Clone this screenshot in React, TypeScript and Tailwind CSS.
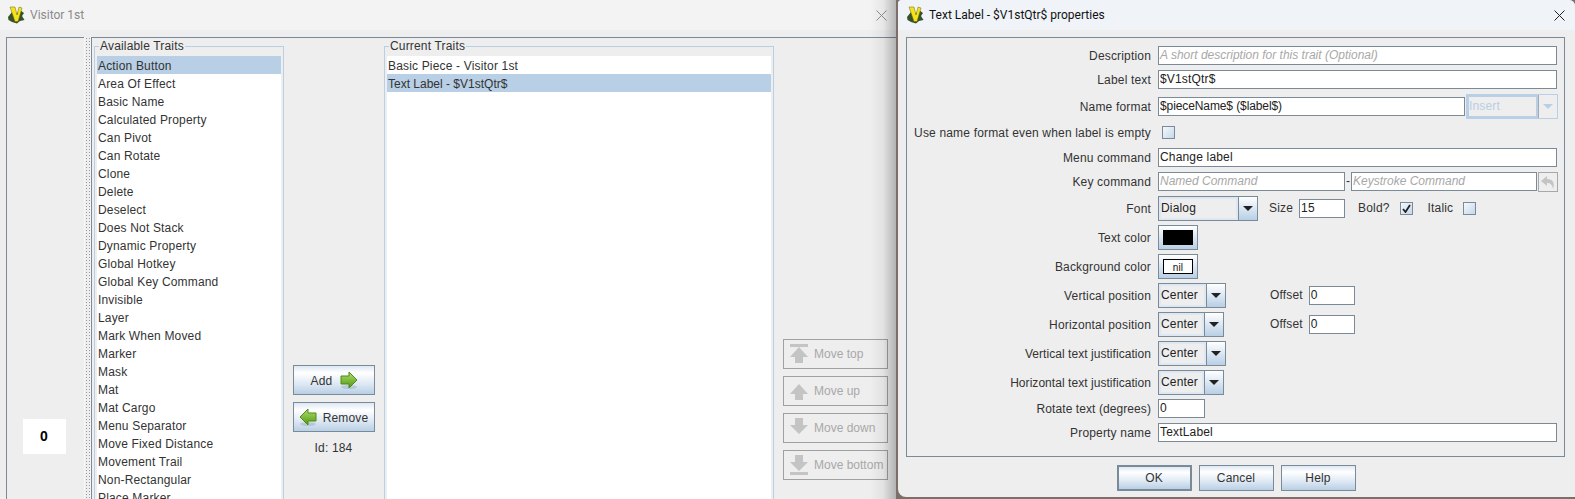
import React from 'react';

const traits = [
  'Action Button', 'Area Of Effect', 'Basic Name', 'Calculated Property', 'Can Pivot', 'Can Rotate', 'Clone',
  'Delete', 'Deselect', 'Does Not Stack', 'Dynamic Property', 'Global Hotkey', 'Global Key Command', 'Invisible',
  'Layer', 'Mark When Moved', 'Marker', 'Mask', 'Mat', 'Mat Cargo', 'Menu Separator', 'Move Fixed Distance',
  'Movement Trail', 'Non-Rectangular', 'Place Marker',
];

const Logo = () => (
  <svg width="18" height="18" viewBox="0 0 18 18" className="shrink-0">
    <path d="M1 11 L5 6 L9 8 L13 4 L17 7 L15 10 L17.5 14 L13 15 L10 17.5 L5 16 L1.5 14 Z" fill="#37522a" />
    <path d="M3 1 L8 1 L10 9 L12 1 L15 2 L11 15.5 L8 15.5 Z" fill="#f5e21a" stroke="#6d6a10" strokeWidth="0.5" />
  </svg>
);

const GreenArrow = ({ left }: { left?: boolean }) => (
  <svg width="18" height="18" viewBox="0 0 18 18" className={left ? 'shrink-0 -scale-x-100' : 'shrink-0'}>
    <defs>
      <linearGradient id="ga" x1="0" y1="0" x2="0" y2="1">
        <stop offset="0" stopColor="#b6dc6a" />
        <stop offset="1" stopColor="#4c9a12" />
      </linearGradient>
    </defs>
    <ellipse cx="9" cy="16" rx="8" ry="2" fill="#8a9aa8" opacity="0.35" />
    <path d="M1 5 H9 V1 L17 9 L9 17 V13 H1 Z" fill="url(#ga)" stroke="#4f8a1a" strokeWidth="1" />
  </svg>
);

const MoveIcon = ({ kind }: { kind: 'top' | 'up' | 'down' | 'bottom' }) => (
  <svg width="18" height="22" viewBox="0 0 18 22" className="shrink-0">
    {kind === 'top' && <rect x="0" y="1" width="18" height="3" fill="#c4c4c4" />}
    {(kind === 'top' || kind === 'up') && <path d="M9 4 L18 14 H13 V20 H5 V14 H0 Z" fill="#c4c4c4" />}
    {(kind === 'down' || kind === 'bottom') && <path d="M5 1 H13 V8 H18 L9 17 L0 8 H5 Z" fill="#c4c4c4" />}
    {kind === 'bottom' && <rect x="0" y="18" width="18" height="3" fill="#c4c4c4" />}
  </svg>
);

const Arrow = ({ disabled }: { disabled?: boolean }) => (
  <div className={`w-0 h-0 border-x-[5px] border-x-transparent border-t-[5px] ${disabled ? 'border-t-[#b8cfe5]' : 'border-t-[#222]'}`} />
);

const Combo = ({ text, mainW }: { text: string; mainW: string }) => (
  <div className="flex h-[25px] border border-[#7a8a99]">
    <div className={`${mainW} border-2 border-[#dde8f3] bg-[#eeeeee] leading-[18px] text-[#222]`}>{text}</div>
    <div className="w-[19px] border-l border-[#7a8a99] flex items-center justify-center bg-gradient-to-b from-white to-[#b8cfe5]">
      <Arrow />
    </div>
  </div>
);

const Input = ({ value, hint, w }: { value?: string; hint?: string; w: string }) => (
  <div className={`${w} h-[19px] border border-[#7a8a99] bg-white pl-[1px] leading-[16px] whitespace-nowrap overflow-hidden ${hint ? 'italic text-[#a8a8a8] tracking-normal' : 'text-[#222]'}`}>
    {value ?? hint}
  </div>
);

const Check = ({ checked }: { checked?: boolean }) => (
  <div className="w-[13px] h-[13px] border border-[#7a8a99] bg-gradient-to-br from-[#f4f8fc] to-[#c6d8ea] flex items-center justify-center">
    {checked && (
      <svg width="9" height="9" viewBox="0 0 9 9">
        <path d="M1 5 L3.5 8 L8 1" fill="none" stroke="#222" strokeWidth="1.8" />
      </svg>
    )}
  </div>
);

const Row = ({ label, h, lh, children }: { label: string; h: string; lh: string; children: React.ReactNode }) => (
  <div className={`flex ${h}`}>
    <div className={`w-[244px] mr-[7px] text-right whitespace-nowrap ${lh}`}>{label}</div>
    <div className="flex-1 flex items-start">{children}</div>
  </div>
);

const Group = ({ title, w, children }: { title: string; w: string; children: React.ReactNode }) => (
  <div className={`relative ${w} mt-[8px] shrink-0 border-l border-r border-t border-[#b8cfe5] pt-[9px] px-[2px]`}>
    <span className="absolute -top-[8px] left-[4px] bg-[#eeeeee] px-[1px] leading-[15px]">{title}</span>
    {children}
  </div>
);

const ActionButton = ({ children, w, cls }: { children: React.ReactNode; w: string; cls?: string }) => (
  <div className={`${w} h-[27px] flex items-center justify-center border border-[#7a8a99] bg-[linear-gradient(180deg,#dde8f3_0%,#ffffff_25%,#dde8f3_65%,#b8cfe5_100%)] ${cls ?? ''}`}>
    {children}
  </div>
);

export default function App() {
  return (
    <div className="relative w-[1575px] h-[499px] overflow-hidden flex bg-[#7c6f6a] text-[12px] text-[#333] tracking-[0.17px] font-['Liberation_Sans',Arial,sans-serif]">
      {/* back window */}
      <div className="relative w-[896px] shrink-0 bg-[#eeeeee] flex flex-col">
        <div className="h-[30px] shrink-0 bg-[#f3f3f3] flex items-center pl-[7px] gap-[5px]">
          <Logo />
          <span className="font-['Roboto',sans-serif] tracking-normal text-[#8a8a8a] text-[12px]">Visitor 1st</span>
          <span className="ml-auto mr-[9px] text-[#8f8f8f]">
            <svg width="11" height="11" viewBox="0 0 11 11"><path d="M0.5 0.5 L10.5 10.5 M10.5 0.5 L0.5 10.5" stroke="#8f8f8f" /></svg>
          </span>
        </div>
        <div className="flex-1 flex pt-[7px] min-h-0">
          <div className="ml-[6px] w-[78px] border-l border-t border-[#7a8a99] flex flex-col items-center pt-[381px] pr-[3px]">
            <div className="w-[43px] h-[35px] bg-white flex items-center justify-center font-bold text-[14px] text-black">0</div>
          </div>
          <div className="w-[7px] border-x border-[#f7f7f7] bg-[radial-gradient(#9a9a9a_0.6px,transparent_0.8px)] bg-[length:3px_3px]" />
          <div className="flex-1 flex border-l border-t border-[#7a8a99] pl-[2px] min-w-0">
            <Group title="Available Traits" w="w-[190px]">
              <div className="bg-white h-[460px] overflow-hidden">
                {traits.map((t, i) => (
                  <div key={t} className={`h-[18px] leading-[20px] pl-[1px] ${i === 0 ? 'bg-[#b8cfe5]' : ''}`}>{t}</div>
                ))}
              </div>
            </Group>
            <div className="w-[100px] shrink-0 flex flex-col items-center pt-[327px] pr-[1px]">
              <ActionButton w="w-[82px]" cls="!h-[30px] gap-[8px] pl-[2px]"><span className="pt-[1px]">Add</span> <GreenArrow /></ActionButton>
              <ActionButton w="w-[82px]" cls="!h-[30px] gap-[6px] mt-[7px]"><GreenArrow left /> <span className="pt-[1px]">Remove</span></ActionButton>
              <div className="mt-[9px] leading-[15px]">Id: 184</div>
            </div>
            <Group title="Current Traits" w="w-[390px]">
              <div className="bg-white h-[460px] overflow-hidden">
                <div className="h-[18px] leading-[20px] pl-[1px]">Basic Piece - Visitor 1st</div>
                <div className="h-[18px] leading-[20px] pl-[1px] bg-[#b8cfe5] tracking-normal">Text Label - $V1stQtr$</div>
              </div>
            </Group>
            <div className="pl-[9px] pt-[301px] flex flex-col gap-[7px] shrink-0">
              {(['top', 'up', 'down', 'bottom'] as const).map((k) => (
                <div key={k} className="w-[105px] h-[30px] border border-[#a0a0a0] flex items-center pl-[6px] gap-[6px] text-[#a8a8a8] tracking-normal">
                  <MoveIcon kind={k} />
                  <span>Move {k}</span>
                </div>
              ))}
            </div>
          </div>
        </div>
        {/* shadow cast by the dialog */}
        <div className="absolute inset-y-0 right-0 w-[26px] bg-gradient-to-r from-transparent via-black/5 to-black/25 pointer-events-none" />
      </div>
      <div className="w-[2px] shrink-0" />

      {/* properties dialog */}
      <div className="flex-1 h-[497px] flex flex-col bg-[#eeeeee] rounded-bl-[8px] rounded-tl-[4px] rounded-tr-[6px] overflow-hidden">
        <div className="h-[30px] shrink-0 bg-[#f0f4f9] flex items-center pl-[8px] gap-[5px]">
          <Logo />
          <span className="font-['Roboto',sans-serif] tracking-normal text-[#111] text-[12px]">Text Label - $V1stQtr$ properties</span>
          <span className="ml-auto mr-[10px]">
            <svg width="11" height="11" viewBox="0 0 11 11"><path d="M0.5 0.5 L10.5 10.5 M10.5 0.5 L0.5 10.5" stroke="#222" /></svg>
          </span>
        </div>
        <div className="mt-[7px] ml-[8px] mr-[10px] h-[420px] border border-[#7a8a99] pt-[8px]">
          <Row label="Description" h="h-[24px]" lh="leading-[21px]"><Input hint="A short description for this trait (Optional)" w="w-[399px]" /></Row>
          <Row label="Label text" h="h-[24px]" lh="leading-[21px]"><Input value="$V1stQtr$" w="w-[399px]" /></Row>
          <Row label="Name format" h="h-[29px]" lh="leading-[27px]">
            <div className="w-[307px] h-[19px] mt-[3px] border border-[#7a8a99] bg-white pl-[1px] leading-[17px] text-[#222] tracking-[-0.1px]">$pieceName$ ($label$)</div>
            <div className="ml-[1px] flex h-[25px] border border-[#b8cfe5]">
              <div className="w-[71px] border-2 border-[#b8cfe5] bg-[#eeeeee] leading-[18px] text-[#b8cfe5]">Insert</div>
              <div className="w-[19px] border-l border-[#a8a8a8] flex items-center justify-center"><Arrow disabled /></div>
            </div>
          </Row>
          <Row label="Use name format even when label is empty" h="h-[25px]" lh="leading-[21px]">
            <div className="mt-[3px] ml-[4px]"><Check /></div>
          </Row>
          <Row label="Menu command" h="h-[24px]" lh="leading-[21px]"><Input value="Change label" w="w-[399px]" /></Row>
          <Row label="Key command" h="h-[24px]" lh="leading-[21px]">
            <Input hint="Named Command" w="w-[187px]" />
            <span className="w-[6px] text-center leading-[19px]">-</span>
            <Input hint="Keystroke Command" w="w-[186px]" />
            <div className="ml-[1px] w-[20px] h-[20px] border border-[#a8a8a8] flex items-center justify-center">
              <svg width="16" height="15" viewBox="0 0 16 15"><path d="M7 1 L1 6 L7 11 V8 C10 8 12 9 13 14 C15 8 13 4 7 4 Z" fill="#c4c4c4" /></svg>
            </div>
          </Row>
          <Row label="Font" h="h-[29px]" lh="leading-[27px]">
            <Combo text="Dialog" mainW="w-[79px]" />
            <span className="ml-[11px] leading-[25px]">Size</span>
            <div className="ml-[6px] mt-[3px]"><Input value="15" w="w-[46px]" /></div>
            <span className="ml-[13px] leading-[25px]">Bold?</span>
            <div className="ml-[10px] mt-[6px]"><Check checked /></div>
            <span className="ml-[15px] leading-[25px]">Italic</span>
            <div className="ml-[10px] mt-[6px]"><Check /></div>
          </Row>
          <Row label="Text color" h="h-[29px]" lh="leading-[27px]">
            <div className="w-[40px] h-[25px] border border-[#7a8a99] bg-gradient-to-b from-white to-[#b8cfe5] flex items-center justify-center">
              <div className="w-[30px] h-[15px] bg-black" />
            </div>
          </Row>
          <Row label="Background color" h="h-[29px]" lh="leading-[27px]">
            <div className="w-[40px] h-[25px] border border-[#7a8a99] bg-gradient-to-b from-white to-[#b8cfe5] flex items-center justify-center">
              <div className="w-[30px] h-[15px] bg-white border border-black text-center text-[10px] leading-[16px] text-[#111]">nil</div>
            </div>
          </Row>
          <Row label="Vertical position" h="h-[29px]" lh="leading-[27px]">
            <Combo text="Center" mainW="w-[47px]" />
            <span className="ml-[44px] leading-[25px]">Offset</span>
            <div className="ml-[6px] mt-[3px]"><Input value="0" w="w-[46px]" /></div>
          </Row>
          <Row label="Horizontal position" h="h-[29px]" lh="leading-[27px]">
            <Combo text="Center" mainW="w-[45px]" />
            <span className="ml-[46px] leading-[25px]">Offset</span>
            <div className="ml-[6px] mt-[3px]"><Input value="0" w="w-[46px]" /></div>
          </Row>
          <Row label="Vertical text justification" h="h-[29px]" lh="leading-[27px] tracking-[0.05px]"><Combo text="Center" mainW="w-[47px]" /></Row>
          <Row label="Horizontal text justification" h="h-[29px]" lh="leading-[27px] tracking-[0.05px]"><Combo text="Center" mainW="w-[45px]" /></Row>
          <Row label="Rotate text (degrees)" h="h-[24px]" lh="leading-[21px] tracking-[0.08px]"><Input value="0" w="w-[47px]" /></Row>
          <Row label="Property name" h="h-[19px]" lh="leading-[21px]"><Input value="TextLabel" w="w-[399px]" /></Row>
        </div>
        <div className="mt-[8px] flex justify-center gap-[7px] pr-[1px]">
          <ActionButton w="w-[75px]" cls="!border-2 !h-[26px]">OK</ActionButton>
          <ActionButton w="w-[75px]" cls="!h-[26px]">Cancel</ActionButton>
          <ActionButton w="w-[75px]" cls="!h-[26px]">Help</ActionButton>
        </div>
      </div>
    </div>
  );
}
